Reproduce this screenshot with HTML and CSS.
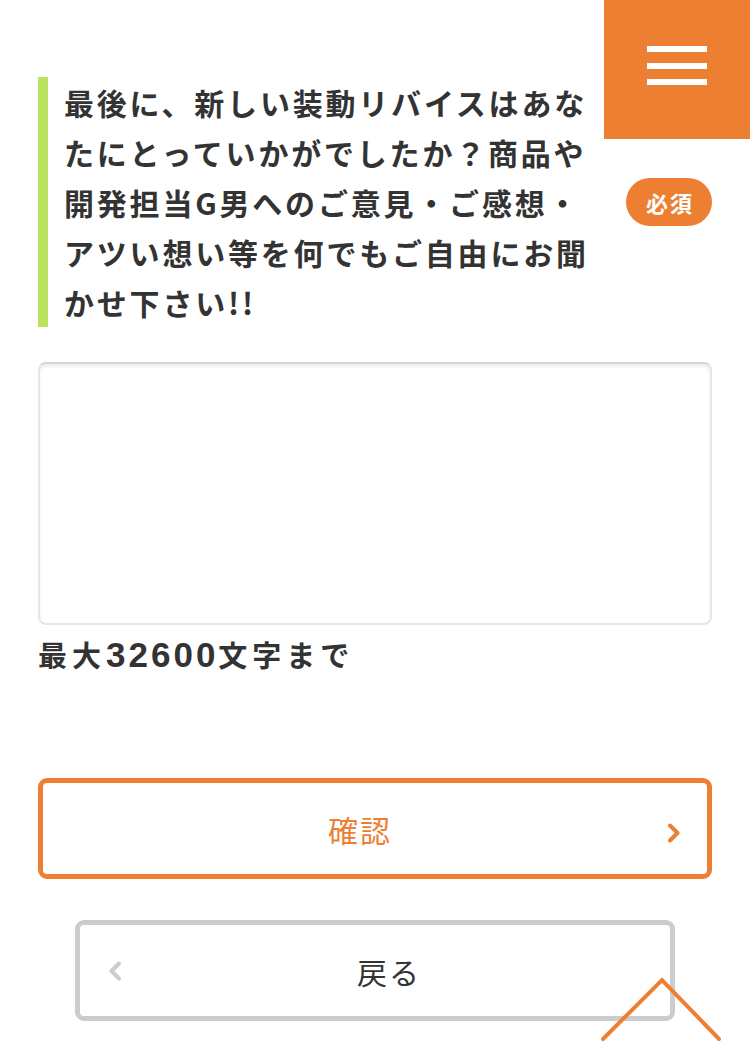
FILE: index.html
```html
<!DOCTYPE html>
<html lang="ja">
<head>
<meta charset="utf-8">
<title>お問い合わせ</title>
<link rel="stylesheet" href="styles.css">
</head>
<body>
<main class="page">
  <div class="question">
    <h2 class="q-title">最後に、新しい装動リバイスはあな<br>たにとっていかがでしたか？商品や<br>開発担当G男へのご意見・ご感想・<br>アツい想い等を何でもご自由にお聞<br>かせ下さい!!</h2>
    <span class="badge">必須</span>
  </div>
  <textarea class="answer"></textarea>
  <p class="note">最大<span class="num">32600</span>文字まで</p>
  <div class="actions">
    <button class="btn btn-confirm" type="button">
      <span class="btn-label">確認</span>
      <svg class="chev chev-right" width="14" height="20" viewBox="0 0 14 20"><path d="M3 2.5 L10.5 10 L3 17.5" fill="none" stroke="#ed7f33" stroke-width="4" stroke-linecap="round" stroke-linejoin="round"/></svg>
    </button>
    <button class="btn btn-back" type="button">
      <svg class="chev chev-left" width="16" height="20" viewBox="0 0 16 20"><path d="M12 2.5 L4.5 10 L12 17.5" fill="none" stroke="#cccccc" stroke-width="4" stroke-linecap="round" stroke-linejoin="round"/></svg>
      <span class="btn-label">戻る</span>
    </button>
  </div>
</main>
<div class="menu-btn" aria-label="menu">
  <span class="bar"></span>
  <span class="bar"></span>
  <span class="bar"></span>
</div>
<a class="pagetop" href="#" aria-label="page top">
  <svg width="124" height="66" viewBox="0 0 124 66"><path d="M2 63 L61 4 L118 63" fill="none" stroke="#ed7f33" stroke-width="4" stroke-linecap="round" stroke-linejoin="miter"/></svg>
</a>
</body>
</html>
```
FILE: styles.css
```css
* { box-sizing: border-box; }
html, body {
  margin: 0;
  padding: 0;
  background: #ffffff;
}
body {
  font-family: "Noto Sans CJK JP", "Noto Sans", sans-serif;
  color: #333333;
  width: 750px;
  height: 1056px;
  overflow: hidden;
  position: relative;
}
.page {
  padding: 77px 38px 0 38px;
}
.question {
  display: flex;
  align-items: center;
  justify-content: space-between;
}
.q-title {
  margin: 0;
  border-left: 10px solid #b9e35f;
  padding-left: 16px;
  font-size: 30px;
  font-weight: 700;
  line-height: 50px;
  letter-spacing: 2.8px;
  color: #333333;
  white-space: nowrap;
}
.badge {
  flex: none;
  width: 86px;
  height: 48px;
  border-radius: 24px;
  background: #ed7f33;
  color: #ffffff;
  font-size: 22px;
  font-weight: 700;
  letter-spacing: 2px;
  display: flex;
  align-items: center;
  justify-content: center;
  padding-left: 2px;
}
.answer {
  display: block;
  width: 674px;
  height: 263px;
  margin: 35px 0 0 0;
  border: 2px solid #e6e6e6;
  border-top-color: #d6d6d6;
  border-radius: 8px;
  box-shadow: inset 0 3px 3px rgba(0, 0, 0, 0.07);
  background: #ffffff;
  resize: none;
  font-family: inherit;
}
.note {
  margin: 9px 0 0 0;
  height: 40px;
  font-size: 29px;
  font-weight: 700;
  line-height: 40px;
  letter-spacing: 5px;
  color: #333333;
}
.note .num {
  font-family: "Liberation Sans", "DejaVu Sans", sans-serif;
  font-size: 35px;
  line-height: 1;
  letter-spacing: 3px;
  margin-left: 0;
}
.actions {
  margin-top: 104px;
  display: flex;
  flex-direction: column;
  align-items: center;
  gap: 41px;
}
.btn {
  position: relative;
  display: flex;
  align-items: center;
  justify-content: center;
  height: 101px;
  border-radius: 9px;
  background: #ffffff;
  font-family: inherit;
  font-size: 30px;
  font-weight: 400;
  letter-spacing: 2px;
  padding: 0;
  cursor: pointer;
}
.btn-confirm {
  width: 674px;
  border: 5px solid #ed7f33;
  color: #ed7f33;
}
.btn-confirm .btn-label {
  margin-right: 30px;
}
.btn-confirm .chev-right {
  position: absolute;
  right: 26px;
  top: 40px;
}
.btn-back {
  width: 600px;
  border: 5px solid #cccccc;
  color: #333333;
}
.btn-back .btn-label {
  margin-left: 28px;
}
.btn-back .chev-left {
  position: absolute;
  left: 27px;
  top: 36px;
}
.menu-btn {
  position: absolute;
  top: 0;
  right: 0;
  width: 146px;
  height: 139px;
  background: #ed7f33;
  display: flex;
  flex-direction: column;
  align-items: center;
  padding-top: 46px;
  gap: 10.5px;
}
.menu-btn .bar {
  display: block;
  width: 60px;
  height: 6px;
  background: #ffffff;
}
.pagetop {
  position: absolute;
  left: 601px;
  top: 976px;
  width: 124px;
  height: 66px;
  display: block;
}
.pagetop svg { display: block; }
```
